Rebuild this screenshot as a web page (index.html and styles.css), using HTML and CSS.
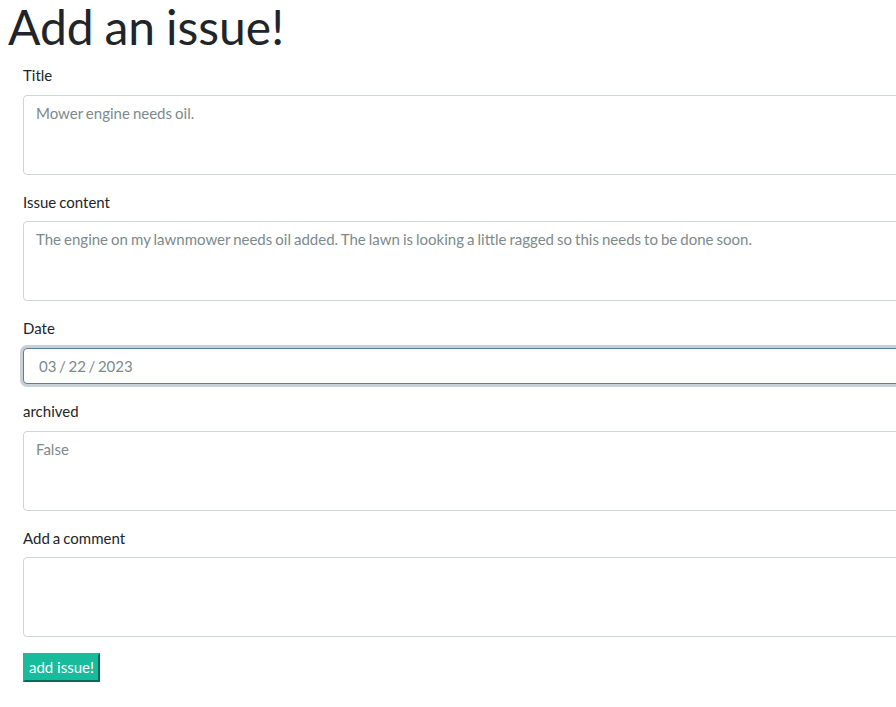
FILE: index.html
```html
<!DOCTYPE html>
<html>
<head>
<meta charset="utf-8">
<link rel="stylesheet" href="styles.css">
</head>
<body>
<div class="page">
  <h1 class="title">Add an issue!</h1>
  <form class="issue-form">
    <div class="form-group">
      <label class="label">Title</label>
      <textarea class="form-control area" placeholder="Mower engine needs oil."></textarea>
    </div>
    <div class="form-group">
      <label class="label">Issue content</label>
      <textarea class="form-control area" placeholder="The engine on my lawnmower needs oil added. The lawn is looking a little ragged so this needs to be done soon."></textarea>
    </div>
    <div class="form-group">
      <label class="label">Date</label>
      <input class="form-control date focused" type="text" value="03 / 22 / 2023">
    </div>
    <div class="form-group">
      <label class="label">archived</label>
      <textarea class="form-control area" placeholder="False"></textarea>
    </div>
    <div class="form-group">
      <label class="label">Add a comment</label>
      <textarea class="form-control area"></textarea>
    </div>
    <button type="button" class="submit">add issue!</button>
  </form>
</div>
</body>
</html>
```

FILE: styles.css
```css
html, body {
  margin: 0;
  padding: 0;
  background: #fff;
  overflow: hidden;
}
body {
  font-family: Lato, "Open Sans", "Liberation Sans", sans-serif;
  font-size: 15px;
  line-height: 1.5;
  color: #212529;
  word-spacing: -0.8px;
}
.page {
  padding: 1px 0 0 8px;
}
.title {
  margin: 0 0 11px;
  font-size: 48px;
  font-weight: 400;
  line-height: 52px;
  color: #212529;
  word-spacing: -1.5px;
}
.issue-form {
  margin-left: 15px;
  display: flex;
  flex-direction: column;
  align-items: flex-start;
}
.form-group {
  display: flex;
  flex-direction: column;
  align-items: flex-start;
  margin-bottom: 16px;
}
.label {
  display: block;
  margin-bottom: 8px;
  line-height: 22.5px;
}
.form-control {
  box-sizing: border-box;
  width: 900px;
  font-family: Lato, "Open Sans", "Liberation Sans", sans-serif;
  font-size: 15px;
  line-height: 22.5px;
  word-spacing: -0.8px;
  color: #7b8a8b;
  background: #fff;
  border: 1px solid #ced4da;
  border-radius: 4px;
  padding: 6px 12px;
  margin: 0;
  outline: none;
}
.form-control::placeholder {
  color: #7b8a8b;
  opacity: 1;
}
.area {
  height: 80px;
  resize: none;
  display: block;
}
.date {
  height: 36.5px;
  padding-left: 15px;
  word-spacing: -1.2px;
}
.focused {
  border-color: #597ea2;
  box-shadow: 0 0 0 3px rgba(44, 62, 80, 0.25);
}
.submit {
  font-family: Lato, "Open Sans", "Liberation Sans", sans-serif;
  font-size: 15px;
  line-height: 18px;
  color: #fff;
  background: #18bc9c;
  border: 2px outset #18bc9c;
  padding: 3px 4px 4px;
  margin: 0;
  cursor: pointer;
}
```
